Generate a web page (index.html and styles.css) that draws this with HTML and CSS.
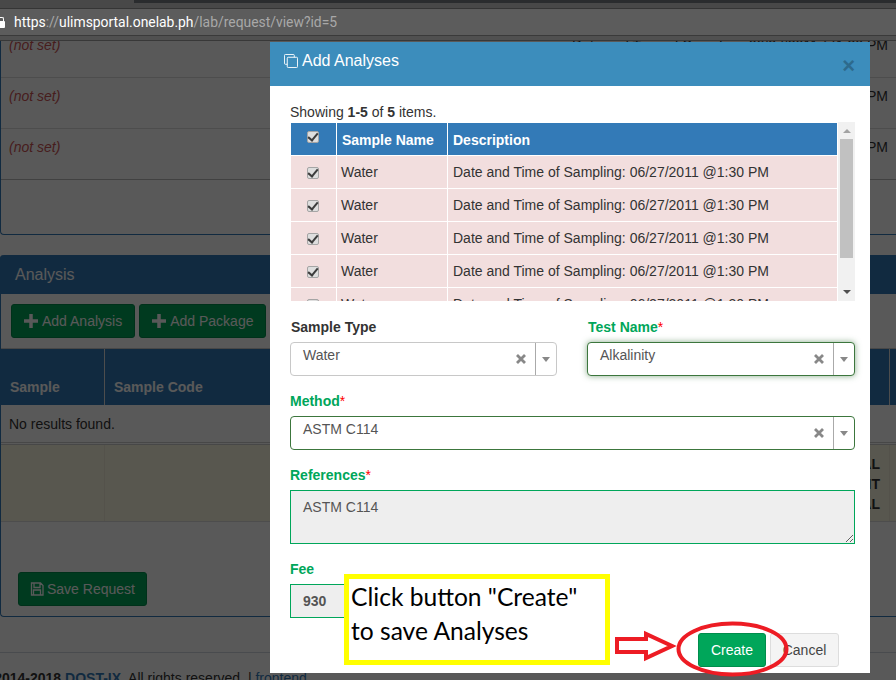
FILE: index.html
```html
<!DOCTYPE html>
<html>
<head>
    <title>Add Analyses</title>
    <meta name="viewport" content="width=device-width, initial-scale=1.0">
    <link rel="stylesheet" href="styles.css">
</head>
<body>
    <div id="browser-bar">
      <div class="tab-strip"><div class="tab"></div></div>
      <div class="address-bar">
        <span class="lock"></span>
        <span class="url"><b>https</b>://<b>ulimsportal.onelab.ph</b>/lab/request/view?id=5</span>
      </div>
      <div class="bar-gap"></div>
    </div>

    <div id="page">
      <div class="panel-top">
        <div class="top-row"><span class="not-set">(not set)</span><span>Date and Time of Sampling: 06/27/2011 @1:30 PM</span></div>
        <div class="top-row"><span class="not-set">(not set)</span><span>Date and Time of Sampling: 06/27/2011 @1:30 PM</span></div>
        <div class="top-row"><span class="not-set">(not set)</span><span>Date and Time of Sampling: 06/27/2011 @1:30 PM</span></div>
      </div>

      <div class="panel-analysis">
        <div class="panel-heading">Analysis</div>
        <div class="toolbar">
          <a class="btn-green"><svg class="plus" viewBox="0 0 12 12"><path d="M4.5 0h3v4.500h4.500v3h-4.500v4.500h-3v-4.500h-4.500v-3h4.500z"/></svg>Add Analysis</a>
          <a class="btn-green"><svg class="plus" viewBox="0 0 12 12"><path d="M4.500 0h3v4.500h4.500v3h-4.500v4.500h-3v-4.500h-4.500v-3h4.500z"/></svg>Add Package</a>
        </div>
        <div class="result-head">
          <div class="cell-a">Sample</div>
          <div class="cell-b">Sample Code</div>
          <div class="cell-c"></div>
        </div>
        <div class="result-empty">No results found.</div>
        <div class="result-total">
          <div class="cell-a"></div>
          <div class="cell-b">SUBTOTAL<br>DISCOUNT<br>TOTAL</div>
          <div class="cell-c"></div>
        </div>
        <a class="btn-green btn-save">
          <svg class="floppy" viewBox="0 0 14 14"><path d="M1.500 1h9l2.500 2.500v9.500h-11.500z M4 1.500v4h6v-4 M3.500 13v-5h7v5"/></svg>Save Request
        </a>
      </div>

      <div class="footer"><b>&copy; 2014-2018 <a>DOST-IX</a>.</b> All rights reserved. | <a>frontend</a></div>
    </div>

    <div id="backdrop"></div>

    <div id="modal">
      <div class="modal-header">
        <svg class="clone" viewBox="0 0 15 15"><path d="M3.500 11h-2a1 1 0 0 1-1-1v-8.500a1 1 0 0 1 1-1h8.500a1 1 0 0 1 1 1v2"/><rect x="3.500" y="3.500" width="11" height="11" rx="1"/></svg>
        <span class="modal-title">Add Analyses</span>
        <span class="close">&times;</span>
      </div>
      <div class="modal-body">
        <div class="summary">Showing <b>1-5</b> of <b>5</b> items.</div>
        <div class="grid-wrap">
          <table class="samples">
            <thead>
              <tr><th class="check-col"><span class="cb"></span></th><th class="name-col">Sample Name</th><th>Description</th></tr>
            </thead>
            <tbody>
              <tr><td class="check-col"><span class="cb"></span></td><td>Water</td><td>Date and Time of Sampling: 06/27/2011 @1:30 PM</td></tr>
              <tr><td class="check-col"><span class="cb"></span></td><td>Water</td><td>Date and Time of Sampling: 06/27/2011 @1:30 PM</td></tr>
              <tr><td class="check-col"><span class="cb"></span></td><td>Water</td><td>Date and Time of Sampling: 06/27/2011 @1:30 PM</td></tr>
              <tr><td class="check-col"><span class="cb"></span></td><td>Water</td><td>Date and Time of Sampling: 06/27/2011 @1:30 PM</td></tr>
              <tr><td class="check-col"><span class="cb"></span></td><td>Water</td><td>Date and Time of Sampling: 06/27/2011 @1:30 PM</td></tr>
            </tbody>
          </table>
          <div class="scrollbar">
            <span class="arrow-up"></span>
            <span class="thumb"></span>
            <span class="arrow-down"></span>
          </div>
        </div>

        <div class="two-col">
          <div class="field">
            <label>Sample Type</label>
            <div class="select">
              <span class="select-value">Water</span>
              <svg class="clear" viewBox="0 0 10 10"><path d="M1 1l8 8M9 1l-8 8"/></svg>
              <span class="select-arrow"><i></i></span>
            </div>
          </div>
          <div class="field ok">
            <label>Test Name<em>*</em></label>
            <div class="select focused">
              <span class="select-value">Alkalinity</span>
              <svg class="clear" viewBox="0 0 10 10"><path d="M1 1l8 8M9 1l-8 8"/></svg>
              <span class="select-arrow"><i></i></span>
            </div>
          </div>
        </div>

        <div class="field ok">
          <label>Method<em>*</em></label>
          <div class="select">
            <span class="select-value">ASTM C114</span>
            <svg class="clear" viewBox="0 0 10 10"><path d="M1 1l8 8M9 1l-8 8"/></svg>
            <span class="select-arrow"><i></i></span>
          </div>
        </div>

        <div class="field ok">
          <label>References<em>*</em></label>
          <textarea readonly>ASTM C114</textarea>
        </div>

        <div class="field ok">
          <label>Fee</label>
          <input class="fee" type="text" value="930" readonly>
        </div>

        <div class="modal-actions">
          <button class="btn-create">Create</button>
          <button class="btn-cancel">Cancel</button>
        </div>
      </div>
    </div>

    <div id="callout">Click button "Create"<br>to save Analyses</div>
    <svg id="marks" viewBox="0 0 896 680">
      <path d="M617 639H646V634L672 646L646 658V652H617Z"/>
      <ellipse cx="732.500" cy="649" rx="54" ry="25.500"/>
    </svg>
</body>
</html>
```

FILE: styles.css
```css
* {
    box-sizing: border-box;
}
html, body {
    height: 100%;
}
body {
    position: relative;
    margin: 0;
    height: 680px;
    overflow: hidden;
    font-family: "Liberation Sans", Arial, sans-serif;
    font-size: 14px;
    line-height: 20px;
    color: #333;
    background: #fff;
}
a {
    color: #337ab7;
}

/* browser chrome */
#browser-bar {
    height: 41px;
    background: #505050;
    border-bottom: 1px solid #383838;
}
.tab-strip {
    height: 9px;
    background: #484848;
    border-bottom: 1px solid #353535;
}
.tab {
    height: 3px;
    margin-left: 134px;
    background: #2a2c2e;
}
.address-bar {
    display: flex;
    align-items: center;
    height: 27px;
    background: #5c5c5c;
    border-bottom: 1px solid #3a3a3a;
    color: #a8a8a8;
    font-family: Roboto, sans-serif;
    font-size: 13.900px;
}
.address-bar b {
    font-weight: normal;
    color: #fff;
}
.lock {
    display: flex;
    width: 5px;
    height: 7px;
    margin: 5px 9px 0 0;
    background: #fff;
    border-radius: 0 1px 1px 0;
}
.lock::before {
    content: "";
    width: 4px;
    height: 5px;
    margin: -4px 0 0 -2px;
    border: 1px solid #fff;
    border-bottom: 0;
    border-radius: 2px 2px 0 0;
}
.url {
    white-space: nowrap;
}

/* page behind the dialog */
#page {
    height: 639px;
    overflow: hidden;
}
.panel-top {
    height: 208px;
    margin-top: -14px;
    background: #fff;
    border-left: 1px solid #337ab7;
    border-bottom: 1px solid #337ab7;
    border-radius: 0 0 0 4px;
}
.top-row {
    display: flex;
    justify-content: space-between;
    height: 51px;
    padding: 8px 8px 0 8px;
    border-bottom: 1px solid #ddd;
}
.top-row:nth-child(3) {
    border-bottom-color: #bbb;
}
.not-set {
    color: #c55;
    font-style: italic;
}
.panel-analysis {
    margin-top: 20px;
    height: 362px;
    border-left: 1px solid #337ab7;
    border-bottom: 1px solid #337ab7;
    border-radius: 4px 0 0 4px;
}
.panel-heading {
    height: 39px;
    margin-left: -1px;
    padding: 10px 15px 0;
    background: #337ab7;
    color: #fff;
    font-size: 16px;
    border-radius: 4px 0 0 0;
}
.toolbar {
    display: flex;
    gap: 4px;
    padding: 10px 10px;
    height: 55px;
    border-bottom: 1px solid #ccc;
}
.btn-green {
    display: inline-flex;
    align-items: center;
    height: 34px;
    padding: 0 12px;
    color: #fff;
    background: #00a65a;
    border: 1px solid #008d4c;
    border-radius: 3px;
}
.plus {
    width: 14px;
    height: 14px;
    margin-right: 4px;
    fill: #fff;
}
.result-head {
    display: flex;
    height: 56px;
    background: #337ab7;
    color: #fff;
    font-weight: bold;
}
.cell-a {
    width: 104px;
    flex: none;
    padding: 28px 9px 0;
    border-right: 1px solid #ddd;
}
.cell-b {
    width: 785px;
    flex: none;
    padding: 28px 9px 0;
    border-right: 1px solid #ddd;
}
.result-empty {
    height: 40px;
    padding: 9px 8px;
    border-bottom: 3px double #ccc;
}
.result-total {
    display: flex;
    height: 77px;
    background: #fcf8e3;
    border-bottom: 1px solid #ddd;
    font-weight: bold;
    color: #333;
}
.result-total .cell-a, .result-total .cell-b {
    padding-top: 9px;
    border-right-color: #f0ecd8;
}
.result-total .cell-b {
    padding-right: 9px;
    text-align: right;
}
.btn-save {
    margin: 50px 0 0 17px;
    padding: 0 11px;
}
.floppy {
    width: 14px;
    height: 14px;
    margin-right: 3px;
    fill: none;
    stroke: #fff;
    stroke-width: 1.300;
}
.footer {
    width: 916px;
    margin: 35px 0 0 -20px;
    padding-top: 15px;
    border-top: 1px solid #d2d6de;
    white-space: nowrap;
}
.footer a {
    text-decoration: none;
}

#backdrop {
    position: absolute;
    top: 41px;
    left: 0;
    right: 0;
    bottom: 0;
    background: rgba(0, 0, 0, 0.65);
}

/* dialog */
#modal {
    position: absolute;
    top: 42px;
    left: 270px;
    width: 600px;
    height: 631px;
    background: #fff;
}
.modal-header {
    display: flex;
    align-items: center;
    height: 44px;
    padding: 0 15px 0 14px;
    background: #3c8dbc;
    color: #fff;
    font-size: 16px;
}
.clone {
    width: 14px;
    height: 14px;
    margin: 0 4px 6px 0;
    fill: none;
    stroke: #fff;
    stroke-width: 1;
}
.modal-title {
    flex: 1;
    padding-bottom: 6px;
}
.close {
    margin: 4px 0 0 0;
    color: #2d6a8d;
    font-size: 22px;
    font-weight: bold;
}
.modal-body {
    padding: 17px 15px 0 20px;
}
.summary {
    height: 19px;
    font-size: 14px;
    line-height: 18px;
}
.grid-wrap {
    display: flex;
    height: 179px;
    overflow: hidden;
    background: #f1f1f1;
}
.samples {
    width: 548px;
    flex: none;
    align-self: flex-start;
    table-layout: fixed;
    border-collapse: separate;
    border-spacing: 1px;
    background: #fff;
}
.samples th {
    height: 32px;
    padding: 2px 5px 0;
    background: #337ab7;
    color: #fff;
    text-align: left;
    font-size: 14px;
}
.samples td {
    height: 32px;
    padding: 0 5px;
    background: #f2dede;
}
.samples td:nth-child(2) {
    padding-left: 4px;
}
.samples .check-col {
    width: 45px;
    padding: 0 2px 0 0;
    text-align: center;
}
.samples .name-col {
    width: 110px;
}
.cb {
    display: inline-flex;
    align-items: center;
    justify-content: center;
    width: 12px;
    height: 12px;
    vertical-align: middle;
    background: #dedede;
    border: 1px solid #a5a5a5;
    border-radius: 2px;
}
.cb::after {
    content: "";
    width: 4px;
    height: 8px;
    margin-top: -2px;
    border-right: 2px solid #3c3c3c;
    border-bottom: 2px solid #3c3c3c;
    transform: rotate(40deg);
}
th .cb {
    margin-top: -6px;
}
.scrollbar {
    display: flex;
    flex-direction: column;
    align-items: center;
    flex: none;
    width: 17px;
}
.arrow-up {
    width: 0;
    height: 0;
    margin: 7px 0 6px;
    border: 4px solid transparent;
    border-top: 0;
    border-bottom: 4px solid #a3a3a3;
}
.thumb {
    width: 13px;
    height: 119px;
    background: #c1c1c1;
}
.arrow-down {
    width: 0;
    height: 0;
    margin-top: 32px;
    border: 4px solid transparent;
    border-bottom: 0;
    border-top: 4px solid #505050;
}
.two-col {
    display: grid;
    grid-template-columns: 267px 268px;
    gap: 30px;
    margin-top: 16px;
}
.two-col .field {
    margin-top: 0;
}
.field {
    margin-top: 15px;
}
.field label {
    display: block;
    height: 20px;
    margin-bottom: 5px;
    font-weight: bold;
}
.two-col label {
    padding-left: 1px;
}
.field.ok label {
    color: #00a65a;
}
.field em {
    color: #f00;
    font-style: normal;
    font-weight: normal;
}
.select {
    display: flex;
    align-items: center;
    height: 34px;
    background: #fff;
    border: 1px solid #c8c8c8;
    border-radius: 4px;
    color: #555;
}
.field.ok .select {
    border-color: #3c763d;
}
.select.focused {
    box-shadow: 0 0 6px rgba(60, 118, 61, 0.6);
}
.select-value {
    flex: 1;
    align-self: flex-start;
    padding: 2px 0 0 12px;
}
.clear {
    width: 10px;
    height: 10px;
    margin-right: 9px;
    stroke: #888;
    stroke-width: 2.800;
}
.select-arrow {
    display: flex;
    align-items: center;
    justify-content: center;
    align-self: stretch;
    width: 21px;
    border-left: 1px solid #aaa;
}
.select-arrow i {
    border: 4.500px solid transparent;
    border-bottom: 0;
    border-top: 5px solid #888;
}
textarea, .fee {
    display: block;
    width: 100%;
    padding: 6px 12px;
    font-family: "Liberation Sans", Arial, sans-serif;
    font-size: 14px;
    line-height: 20px;
    color: #555;
    background: #eee;
    border: 1px solid #00a65a;
    border-radius: 0;
    outline: none;
}
textarea {
    height: 54px;
}
.fee {
    width: 267px;
    height: 34px;
    font-weight: bold;
}
.modal-actions {
    display: flex;
    justify-content: flex-end;
    gap: 4px;
    margin: 15px 16px 0 0;
}
.modal-actions button {
    width: 69px;
    height: 34px;
    padding: 0;
    font-family: "Liberation Sans", Arial, sans-serif;
    font-size: 14px;
    border-radius: 3px;
}
.modal-actions .btn-create {
    width: 68px;
    color: #fff;
    background: #00a65a;
    border: 1px solid #008d4c;
}
.btn-cancel {
    color: #444;
    background: #f4f4f4;
    border: 1px solid #ddd;
}

/* annotations on top of the screenshot */
#callout {
    position: absolute;
    top: 574px;
    left: 344px;
    width: 266px;
    height: 91px;
    padding: 1px 2px 0;
    background: #fff;
    border: 5px solid #ff0;
    color: #000;
    font-family: Lato, sans-serif;
    font-size: 24.600px;
    line-height: 34px;
    white-space: nowrap;
}
#marks {
    position: absolute;
    top: 0;
    left: 0;
    width: 896px;
    height: 680px;
    fill: none;
    stroke: #ed1c24;
    stroke-width: 4;
}
#marks path {
    fill: #fff;
}
```
